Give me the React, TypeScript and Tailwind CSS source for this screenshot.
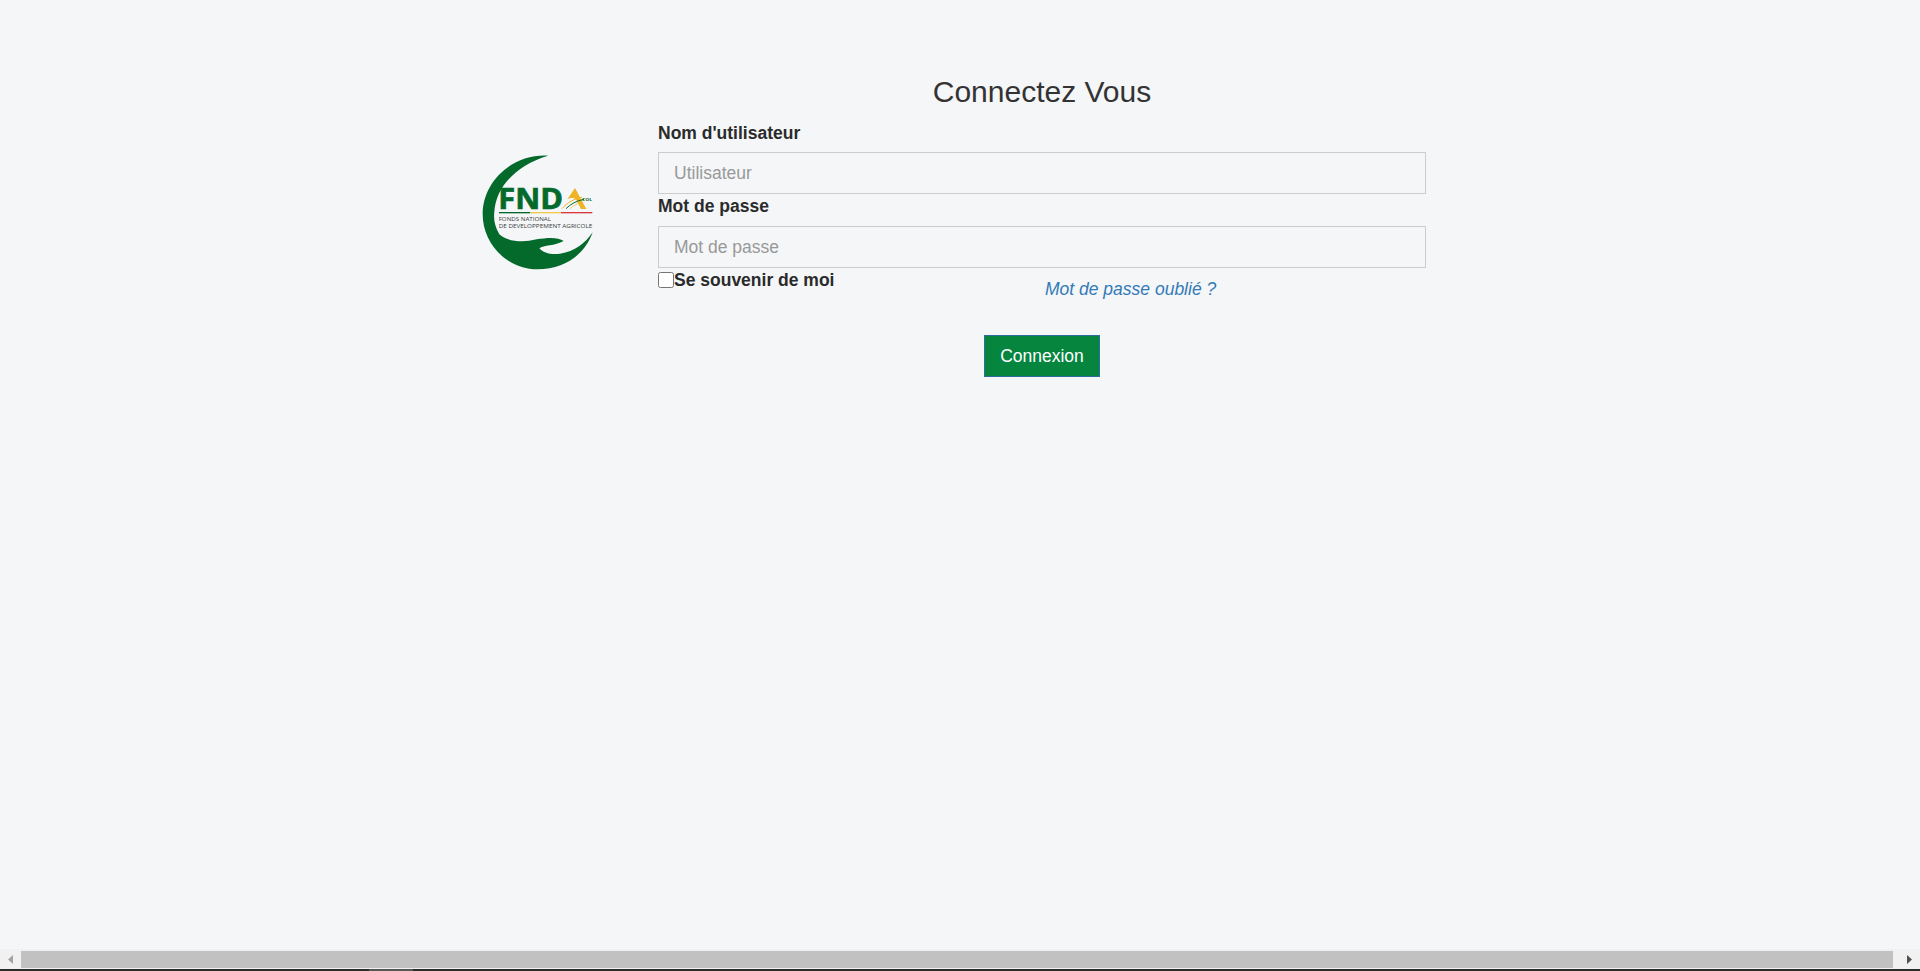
const Logo = () => (
  <svg viewBox="0 0 450 420" className="w-[150px] h-[140px] shrink-0 block">
    <path fill="#046a2c" d="M264 47 C150 42 68 130 68 222 C68 315 145 388 232 388 C315 388 375 342 398 277 C375 310 345 335 300 341 C275 345 250 340 238 325 C250 315 285 318 311 303 C295 290 260 293 230 298 C185 310 140 303 118 283 C105 260 100 240 103 215 C108 140 170 75 264 47 Z" />
    <text x="115" y="206" fontFamily="Open Sans, sans-serif" fontWeight="700" fontSize="84" fill="#046a2c" stroke="#046a2c" strokeWidth="2" textLength="194" lengthAdjust="spacingAndGlyphs">FND</text>
    <path fill="#f0b323" d="M322 178 L345 144 L379 207 L363 207 L348 178 C340 172 330 174 322 178 Z" />
    <path fill="none" stroke="#f0b323" strokeWidth="3" d="M306 206 C322 188 342 176 366 172" />
    <path fill="none" stroke="#046a2c" strokeWidth="3" d="M318 206 C332 192 350 182 372 178" />
    <path fill="none" stroke="#f0b323" strokeWidth="2" d="M330 206 C340 197 352 190 364 187" />
    <text x="366" y="184" fontFamily="Open Sans, sans-serif" fontWeight="700" fontSize="12" fill="#046a2c" textLength="30" lengthAdjust="spacingAndGlyphs">COL</text>
    <rect x="117" y="216" width="94" height="4" fill="#046a2c" />
    <rect x="211" y="216" width="92" height="4" fill="#f2c94c" />
    <rect x="303" y="216" width="94" height="4" fill="#d9363e" />
    <text x="116" y="244" fontFamily="Open Sans, sans-serif" fontSize="17" fill="#3c3c3c" textLength="157" lengthAdjust="spacingAndGlyphs">FONDS NATIONAL</text>
    <text x="116" y="264" fontFamily="Open Sans, sans-serif" fontSize="17" fill="#3c3c3c" textLength="281" lengthAdjust="spacingAndGlyphs">DE DEVELOPPEMENT AGRICOLE</text>
  </svg>
);

export default function App() {
  return (
    <div className="h-[971px] flex flex-col overflow-hidden bg-[#f4f6f8] font-['Liberation_Sans',Arial,sans-serif] text-[#333]">
      <main className="flex-1 min-h-0 pl-[460px] pt-[75px]">
        <div className="flex">
          <div className="w-[198px] pt-[65px]">
            <Logo />
          </div>
          <form className="w-[768px]">
            <h3 className="text-center text-[30px] leading-[33px] text-[#333] mb-[15px]">Connectez Vous</h3>
            <label className="block font-bold text-[17.5px] leading-[20px] mb-[9px] text-[#2b2b2b]">Nom d'utilisateur</label>
            <input placeholder="Utilisateur" className="block w-full h-[42px] border border-[#ccc] bg-transparent px-[15px] text-[17.5px] placeholder:text-[#999]" />
            <label className="block font-bold text-[17.5px] leading-[20px] mt-[2px] mb-[10px] text-[#2b2b2b]">Mot de passe</label>
            <input placeholder="Mot de passe" className="block w-full h-[42px] border border-[#ccc] bg-transparent px-[15px] text-[17.5px] placeholder:text-[#999]" />
            <div className="flex items-start">
              <label className="flex items-center w-[387px] font-bold text-[17.5px] leading-[24px] text-[#2b2b2b]">
                <input type="checkbox" className="w-[16px] h-[16px] m-0" />
                Se souvenir de moi
              </label>
              <a href="#" className="mt-[9px] italic text-[17.5px] leading-[24px] text-[#337ab7]">Mot de passe oublié ?</a>
            </div>
            <div className="flex justify-center mt-[34px]">
              <button type="button" className="w-[116px] h-[42px] bg-[#05853e] border border-[#2e6da4] text-white text-[17.5px]">Connexion</button>
            </div>
          </form>
        </div>
      </main>
      <div className="h-[20px] bg-[#f1f1f1] flex shrink-0 pt-[2px] pb-[1px]">
        <svg viewBox="0 0 21 17" className="w-[21px] h-[17px] shrink-0"><path d="M8 8.5 L13 4 V13 Z" fill="#a3a3a3" /></svg>
        <div className="flex-1 h-full bg-[#c1c1c1]" />
        <svg viewBox="0 0 27 17" className="w-[27px] h-[17px] shrink-0"><path d="M14 4 L19 8.5 L14 13 Z" fill="#505050" /></svg>
      </div>
      <div className="h-[2px] bg-[#2b2b2b] shrink-0 pl-[369px]">
        <div className="w-[44px] h-full bg-[#555]" />
      </div>
    </div>
  );
}
